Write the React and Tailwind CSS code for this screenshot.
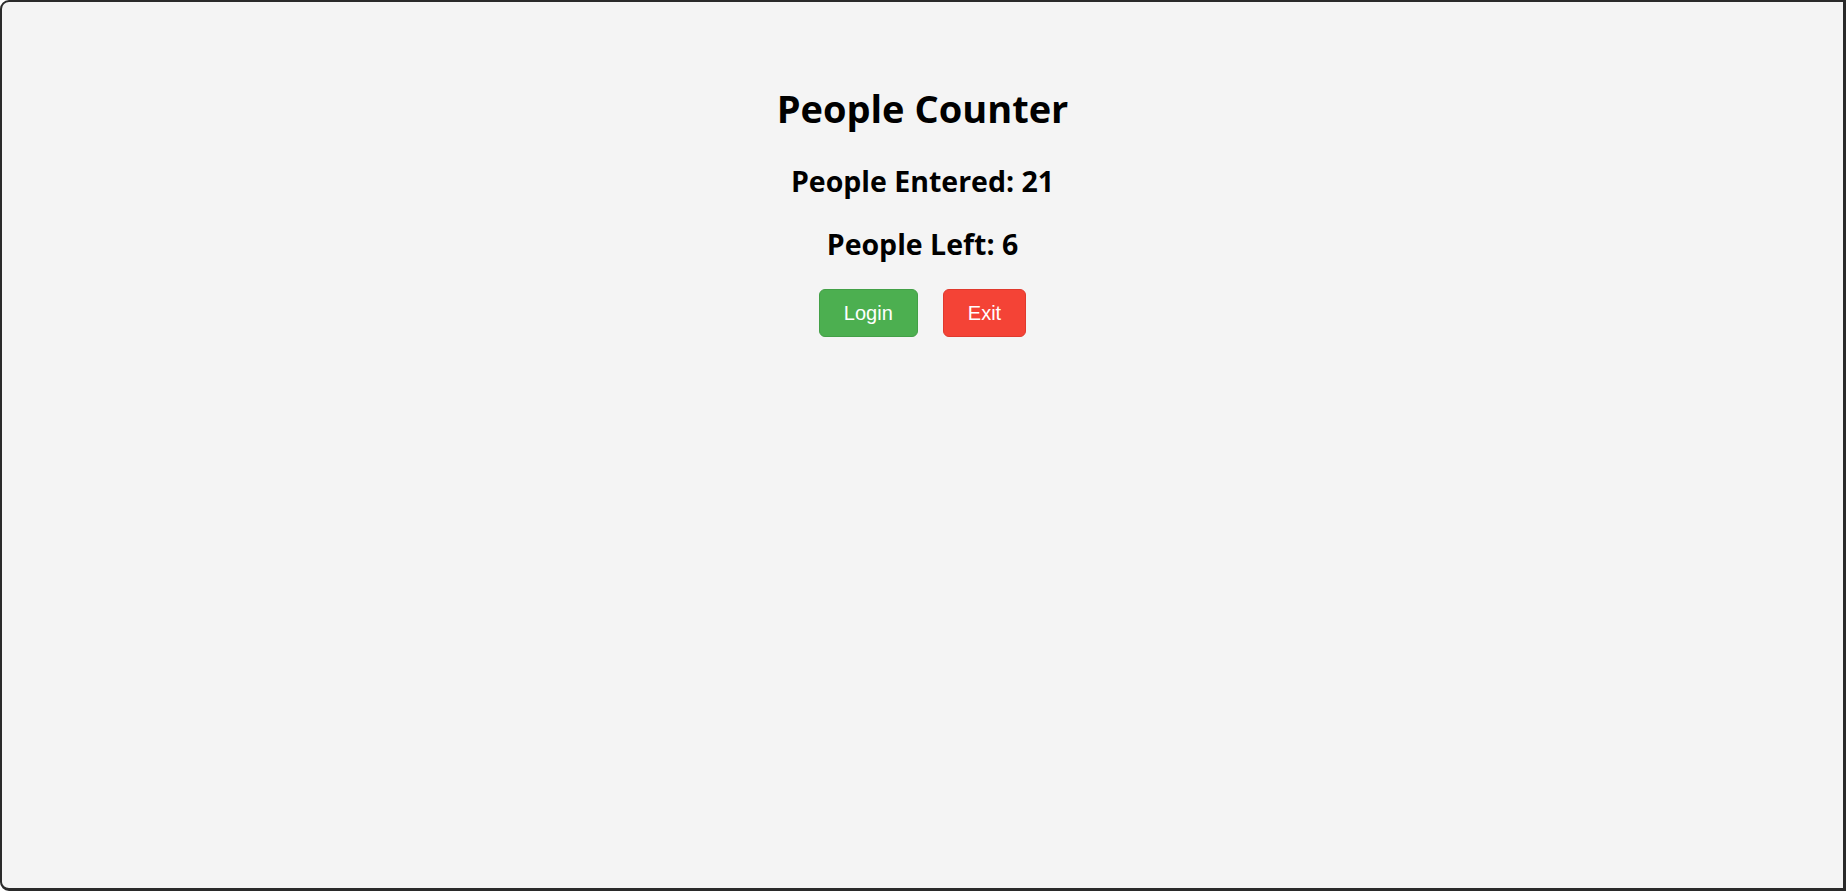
export default function App() {
  return (
    <div className="w-[1846px] h-[891px] bg-white">
      <div className="box-border w-full h-full border-t-2 border-l-2 border-r-[3px] border-b-[3px] border-[#2a2a2a] rounded-l-[9px] bg-[#f4f4f4] flex flex-col items-center text-black" style={{ fontFamily: '"Open Sans", "Noto Sans", sans-serif' }}>
        <h1 className="mt-[82px] text-[38px] leading-[48px] font-bold">People Counter</h1>
        <h2 className="mt-[31px] text-[28.5px] leading-[37px] font-bold">People Entered: 21</h2>
        <h2 className="mt-[26px] text-[28.5px] leading-[37px] font-bold">People Left: 6</h2>
        <div className="mt-[26px] flex gap-[25px]" style={{ fontFamily: '"Liberation Sans", Arial, sans-serif' }}>
          <button className="h-[48px] px-[24px] bg-[#4caf50] text-white text-[20px] rounded-[6px] border border-[#43a047]">Login</button>
          <button className="h-[48px] px-[24px] bg-[#f44336] text-white text-[20px] rounded-[6px] border border-[#e0392d]">Exit</button>
        </div>
      </div>
    </div>
  );
}
